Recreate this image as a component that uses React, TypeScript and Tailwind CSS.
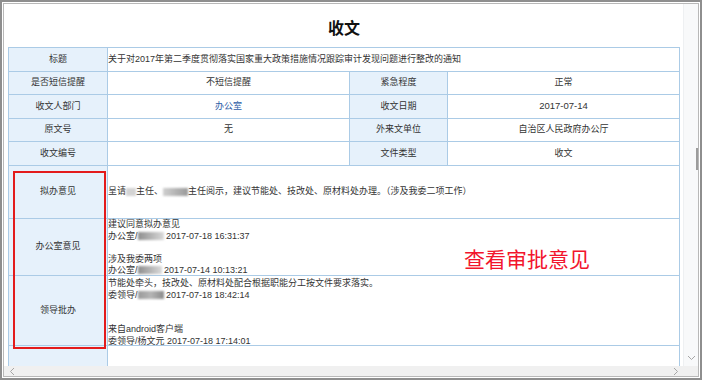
import React from "react";

const Blr = ({ cls }: { cls: string }) => (
  <span className={"inline-block h-[8px] align-[-1px] blur-[1px] " + cls} />
);

export default function App() {
  const label =
    "bg-[#e6f1fb] flex items-center justify-center text-[#333]";
  const val = "bg-white flex items-center justify-center text-[#333]";
  return (
    <div className="relative w-[702px] h-[380px] bg-white border-2 border-[#8e8e8e] p-px font-['Liberation_Sans','Noto_Sans_CJK_SC',sans-serif] text-[9px] overflow-hidden">
      <div className="w-full h-full border border-[#b8b8b8] grid grid-cols-[679px_15px] grid-rows-[362px_10px]">
        {/* viewport */}
        <div className="overflow-hidden bg-white">
          <div className="h-[43px] w-[672px] ml-[4px] pt-[2px] flex items-center justify-center font-['Noto_Sans_CJK_SC',sans-serif] text-[16px] font-bold text-[#111]">
            收文
          </div>
          <div className="ml-[4px] w-[672px] grid grid-cols-[98px_241px_97px_231px] grid-rows-[23px_22px_23px_22px_23px_52px_56px_69px_40px] gap-px p-px bg-[#abcbe6]">
            <div className={label}>标题</div>
            <div className="col-span-3 bg-white flex items-center text-[#333] whitespace-nowrap overflow-hidden">
              关于对2017年第二季度贯彻落实国家重大政策措施情况跟踪审计发现问题进行整改的通知
            </div>

            <div className={label}>是否短信提醒</div>
            <div className={val}>不短信提醒</div>
            <div className={label}>紧急程度</div>
            <div className={val}>正常</div>

            <div className={label}>收文人部门</div>
            <div className="bg-white flex items-center justify-center text-[#2d5ca6]">办公室</div>
            <div className={label}>收文日期</div>
            <div className="bg-white flex items-center justify-center text-[#333] text-[9.5px]">2017-07-14</div>

            <div className={label}>原文号</div>
            <div className={val}>无</div>
            <div className={label}>外来文单位</div>
            <div className={val}>自治区人民政府办公厅</div>

            <div className={label}>收文编号</div>
            <div className={val}></div>
            <div className={label}>文件类型</div>
            <div className={val}>收文</div>

            <div className={label}>拟办意见</div>
            <div className="col-span-3 bg-white flex items-center text-[#333] whitespace-nowrap">
              <span>呈请</span>
              <Blr cls="w-[10px] bg-[#d4d4d4]" />
              <span>主任、</span>
              <Blr cls="w-[25px] bg-linear-to-r from-[#d0d0d0] to-[#9a9a9a]" />
              <span>主任阅示，建议节能处、技改处、原材料处办理。（涉及我委二项工作）</span>
            </div>

            <div className={label}>办公室意见</div>
            <div className="col-span-3 bg-white text-[#333] leading-[11.5px] whitespace-nowrap">
              <div>建议同意拟办意见</div>
              <div>
                办公室/
                <Blr cls="w-[26px] bg-linear-to-r from-[#8f8f8f] to-[#dadada]" /> 2017-07-18 16:31:37
              </div>
              <div className="h-[11.5px]" />
              <div>涉及我委两项</div>
              <div>
                办公室/
                <Blr cls="w-[24px] bg-linear-to-r from-[#8f8f8f] to-[#dadada]" /> 2017-07-14 10:13:21
              </div>
            </div>

            <div className={label}>领导批办</div>
            <div className="col-span-3 bg-white text-[#333] leading-[11.5px] whitespace-nowrap pt-[2px]">
              <div>节能处牵头，技改处、原材料处配合根据职能分工按文件要求落实。</div>
              <div>
                委领导/
                <Blr cls="w-[26px] bg-linear-to-r from-[#9a9a9a] via-[#b5b5b5] to-[#8a8a8a]" /> 2017-07-18 18:42:14
              </div>
              <div className="h-[11.5px]" />
              <div className="h-[11.5px]" />
              <div>来自android客户端</div>
              <div>委领导/杨文元 2017-07-18 17:14:01</div>
            </div>

            <div className="bg-[#e6f1fb]" />
            <div className="col-span-3 bg-white" />
          </div>
        </div>
        {/* vertical scrollbar */}
        <div className="bg-[#f8f9fa] border-l border-[#eef0f2] flex flex-col items-center justify-end pb-[4px] relative">
          <div className="absolute right-0 top-[144px] w-[2px] h-[22px] bg-[#9c9c9c]" />
          <svg width="9" height="6" viewBox="0 0 9 6" className="mb-[1px]">
            <path d="M1 1 L4.5 4.5 L8 1" fill="none" stroke="#a6a6a6" strokeWidth="1" />
          </svg>
        </div>
        {/* horizontal scrollbar */}
        <div className="bg-[#f0f0f0] flex items-center justify-between pl-[5px] pr-[4px]">
          <svg width="6" height="9" viewBox="0 0 6 9">
            <path d="M5 1 L1.5 4.5 L5 8" fill="none" stroke="#a6a6a6" strokeWidth="1" />
          </svg>
          <svg width="6" height="9" viewBox="0 0 6 9">
            <path d="M1 1 L4.5 4.5 L1 8" fill="none" stroke="#a6a6a6" strokeWidth="1" />
          </svg>
        </div>
        <div className="bg-[#f0f0f0]" />
      </div>

      {/* annotations */}
      <div className="absolute left-[11px] top-[169px] w-[93px] h-[178px] border-2 border-[#e31b1b]" />
      <div className="absolute left-[462px] top-[246px] text-[21px] leading-[21px] text-[#f2152d] font-['Noto_Sans_CJK_SC',sans-serif] whitespace-nowrap">
        查看审批意见
      </div>
    </div>
  );
}
